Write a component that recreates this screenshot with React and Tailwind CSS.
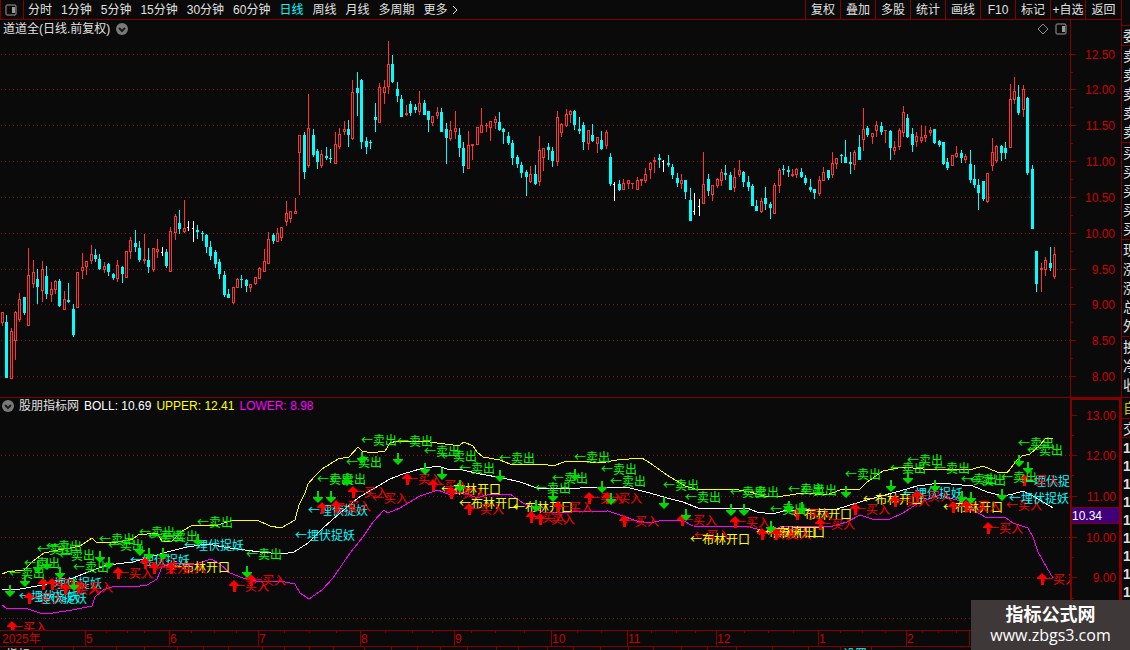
import React from 'react';

const periods = ['分时', '1分钟', '5分钟', '15分钟', '30分钟', '60分钟', '日线', '周线', '月线', '多周期'];
const actions = ['复权', '叠加', '多股', '统计', '画线', 'F10', '标记', '+自选', '返回'];

// x, kind (r = up, c = down, w = flat), high, body top, body bottom, low
const candles = [
    [2, 'r', 312, 312, 323, 326], [6, 'c', 315, 322, 378, 378], [11, 'r', 328, 331, 379, 379], [15, 'r', 311, 312, 341, 360],
    [19, 'r', 293, 299, 320, 322], [24, 'c', 297, 297, 313, 315], [28, 'r', 248, 275, 326, 326], [33, 'r', 260, 272, 284, 288],
    [37, 'c', 269, 279, 287, 304], [42, 'r', 261, 269, 291, 302], [46, 'c', 266, 276, 294, 299], [51, 'r', 282, 289, 295, 302],
    [55, 'r', 280, 281, 290, 294], [59, 'c', 279, 281, 306, 307], [64, 'r', 291, 299, 310, 310], [68, 'c', 283, 300, 302, 303],
    [73, 'c', 304, 309, 335, 337], [77, 'r', 272, 272, 308, 308], [82, 'r', 253, 267, 271, 279], [86, 'r', 261, 261, 267, 275],
    [91, 'r', 245, 254, 261, 264], [95, 'c', 249, 255, 259, 262], [99, 'c', 254, 259, 269, 270], [104, 'r', 262, 266, 270, 273],
    [108, 'c', 263, 264, 272, 276], [113, 'c', 273, 274, 278, 280], [117, 'r', 260, 265, 279, 282], [122, 'c', 266, 267, 274, 283],
    [126, 'r', 251, 251, 278, 278], [130, 'r', 237, 240, 252, 259], [135, 'c', 230, 243, 247, 252], [139, 'c', 241, 248, 260, 262],
    [144, 'r', 234, 259, 261, 264], [148, 'c', 248, 260, 267, 273], [153, 'r', 248, 248, 270, 272], [157, 'r', 239, 249, 252, 258],
    [162, 'w', 247, 252, 253, 256], [166, 'c', 249, 252, 266, 268], [170, 'r', 227, 231, 272, 272], [175, 'r', 214, 216, 233, 240],
    [179, 'c', 210, 223, 229, 234], [184, 'r', 200, 228, 232, 233], [188, 'w', 221, 227, 228, 231], [193, 'w', 221, 228, 229, 242],
    [197, 'c', 225, 230, 232, 239], [202, 'c', 231, 233, 234, 241], [206, 'c', 234, 235, 247, 253], [210, 'c', 241, 247, 256, 260],
    [215, 'c', 250, 252, 264, 268], [219, 'c', 259, 262, 274, 279], [224, 'c', 271, 275, 295, 297], [228, 'c', 289, 294, 298, 298],
    [233, 'r', 287, 287, 303, 304], [237, 'r', 278, 279, 288, 288], [241, 'c', 275, 279, 280, 288], [246, 'c', 279, 280, 286, 292],
    [250, 'r', 284, 284, 288, 292], [255, 'r', 277, 277, 284, 285], [259, 'r', 267, 268, 279, 279], [264, 'r', 249, 261, 272, 272],
    [268, 'r', 232, 239, 264, 264], [273, 'c', 233, 235, 241, 244], [277, 'r', 228, 233, 242, 242], [281, 'r', 227, 227, 238, 241],
    [286, 'r', 201, 213, 222, 226], [290, 'r', 211, 211, 219, 223], [295, 'r', 198, 211, 214, 214], [299, 'r', 135, 135, 153, 195],
    [304, 'c', 132, 135, 172, 179], [308, 'r', 94, 128, 166, 168], [313, 'c', 129, 135, 155, 157], [317, 'c', 149, 151, 162, 169],
    [321, 'r', 150, 154, 166, 168], [326, 'c', 147, 156, 158, 160], [330, 'c', 149, 158, 159, 163], [335, 'r', 132, 144, 164, 164],
    [339, 'r', 128, 134, 147, 149], [344, 'r', 121, 129, 132, 135], [348, 'c', 120, 129, 135, 147], [352, 'r', 80, 92, 139, 140],
    [357, 'c', 72, 88, 93, 116], [361, 'c', 79, 80, 142, 149], [366, 'c', 137, 141, 147, 154], [370, 'c', 140, 142, 143, 149],
    [375, 'c', 103, 117, 120, 132], [379, 'r', 83, 87, 123, 123], [384, 'r', 80, 87, 93, 104], [388, 'r', 41, 64, 87, 94],
    [392, 'c', 55, 64, 82, 83], [397, 'c', 82, 89, 96, 102], [401, 'c', 95, 99, 117, 117], [406, 'r', 105, 113, 115, 116],
    [410, 'c', 101, 104, 113, 116], [415, 'c', 104, 107, 110, 113], [419, 'r', 91, 103, 112, 115], [424, 'c', 100, 103, 115, 115],
    [428, 'c', 111, 111, 120, 132], [432, 'r', 116, 116, 123, 126], [437, 'r', 107, 112, 116, 119], [441, 'c', 108, 112, 132, 132],
    [446, 'c', 123, 129, 138, 164], [450, 'r', 121, 130, 139, 141], [455, 'r', 111, 128, 132, 139], [459, 'c', 128, 135, 148, 157],
    [463, 'c', 142, 148, 166, 173], [468, 'r', 131, 145, 169, 169], [472, 'r', 144, 144, 146, 160], [477, 'r', 127, 127, 145, 145],
    [481, 'r', 108, 125, 133, 133], [486, 'r', 123, 125, 126, 132], [490, 'r', 121, 121, 128, 141], [495, 'r', 116, 119, 123, 129],
    [499, 'c', 112, 122, 130, 131], [503, 'c', 128, 129, 132, 144], [508, 'c', 132, 136, 143, 145], [512, 'c', 140, 143, 158, 165],
    [517, 'c', 155, 157, 164, 168], [521, 'c', 162, 165, 173, 178], [526, 'c', 170, 172, 177, 196], [530, 'r', 166, 174, 182, 183],
    [535, 'c', 165, 174, 184, 185], [539, 'r', 136, 150, 182, 186], [543, 'r', 148, 148, 158, 171], [548, 'c', 143, 147, 150, 160],
    [552, 'c', 147, 151, 161, 167], [557, 'r', 111, 117, 162, 166], [561, 'r', 123, 124, 133, 137], [566, 'r', 109, 114, 126, 127],
    [570, 'r', 110, 111, 115, 123], [574, 'c', 110, 111, 125, 130], [579, 'c', 117, 129, 131, 134], [583, 'c', 122, 125, 142, 150],
    [588, 'r', 130, 130, 144, 150], [592, 'c', 124, 135, 141, 142], [597, 'r', 137, 137, 144, 153], [601, 'c', 131, 140, 149, 150],
    [606, 'r', 130, 132, 146, 149], [610, 'c', 153, 157, 184, 186], [614, 'w', 182, 184, 185, 201], [619, 'c', 180, 184, 190, 191],
    [623, 'r', 179, 183, 190, 190], [628, 'r', 180, 180, 184, 189], [632, 'r', 183, 183, 184, 189], [637, 'r', 177, 180, 190, 190],
    [641, 'r', 179, 179, 181, 186], [645, 'r', 168, 174, 181, 183], [650, 'r', 162, 163, 170, 179], [654, 'r', 157, 160, 162, 173],
    [659, 'c', 154, 158, 160, 168], [663, 'w', 160, 161, 162, 172], [668, 'c', 155, 163, 165, 167], [672, 'c', 164, 167, 175, 179],
    [677, 'c', 173, 178, 183, 187], [681, 'r', 174, 180, 184, 189], [685, 'c', 180, 180, 192, 199], [690, 'c', 188, 200, 221, 221],
    [694, 'w', 193, 211, 212, 215], [699, 'w', 199, 206, 207, 216], [703, 'r', 152, 184, 204, 204], [708, 'c', 174, 179, 191, 196],
    [712, 'r', 185, 185, 195, 201], [717, 'r', 178, 179, 186, 188], [721, 'r', 169, 172, 181, 186], [725, 'c', 165, 173, 175, 180],
    [730, 'c', 172, 175, 190, 190], [734, 'r', 168, 177, 188, 192], [739, 'r', 160, 170, 175, 177], [743, 'c', 171, 172, 182, 187],
    [748, 'c', 176, 182, 187, 191], [752, 'c', 184, 186, 206, 206], [756, 'c', 200, 206, 211, 211], [761, 'r', 198, 201, 212, 213],
    [765, 'c', 187, 198, 204, 210], [770, 'c', 202, 204, 208, 219], [774, 'r', 183, 185, 214, 214], [779, 'r', 168, 170, 186, 193],
    [783, 'c', 165, 169, 170, 175], [788, 'c', 166, 170, 172, 177], [792, 'r', 169, 174, 176, 177], [796, 'r', 168, 169, 175, 178],
    [801, 'c', 168, 172, 177, 178], [805, 'c', 175, 178, 183, 185], [810, 'c', 179, 187, 190, 192], [814, 'c', 189, 189, 193, 199],
    [819, 'r', 176, 180, 194, 196], [823, 'r', 167, 172, 181, 181], [828, 'c', 170, 170, 178, 180], [832, 'r', 152, 163, 175, 178],
    [836, 'r', 158, 158, 164, 169], [841, 'c', 154, 155, 156, 163], [845, 'c', 140, 157, 163, 163], [850, 'c', 152, 162, 164, 174],
    [854, 'r', 150, 152, 165, 170], [859, 'c', 135, 147, 160, 160], [863, 'r', 108, 129, 140, 151], [867, 'c', 126, 128, 135, 137],
    [872, 'r', 133, 133, 137, 144], [876, 'r', 121, 125, 131, 137], [881, 'c', 122, 126, 132, 135], [885, 'r', 130, 130, 131, 143],
    [890, 'c', 130, 131, 148, 160], [894, 'r', 141, 147, 151, 155], [899, 'r', 128, 130, 147, 150], [903, 'r', 106, 112, 133, 137],
    [907, 'c', 114, 118, 137, 138], [912, 'c', 128, 134, 145, 152], [916, 'r', 132, 136, 142, 147], [921, 'r', 125, 137, 141, 143],
    [925, 'r', 126, 135, 138, 142], [930, 'r', 127, 130, 133, 136], [934, 'c', 129, 129, 143, 144], [939, 'c', 140, 141, 145, 147],
    [943, 'c', 142, 142, 164, 165], [947, 'c', 158, 162, 168, 170], [952, 'r', 155, 155, 166, 166], [956, 'r', 146, 153, 157, 158],
    [961, 'c', 150, 153, 158, 163], [965, 'r', 154, 156, 160, 163], [970, 'c', 150, 164, 180, 183], [974, 'c', 165, 179, 185, 188],
    [978, 'c', 179, 185, 193, 210], [983, 'c', 181, 181, 199, 201], [987, 'r', 173, 173, 202, 203], [992, 'r', 138, 152, 166, 171],
    [996, 'r', 145, 146, 161, 163], [1001, 'c', 145, 146, 153, 161], [1005, 'c', 142, 148, 153, 159], [1010, 'r', 84, 99, 148, 148],
    [1014, 'r', 77, 91, 100, 104], [1018, 'c', 85, 97, 113, 115], [1023, 'r', 85, 89, 110, 117], [1027, 'c', 97, 98, 173, 175],
    [1032, 'c', 165, 169, 229, 229], [1036, 'c', 251, 251, 284, 292], [1041, 'r', 263, 268, 270, 292], [1045, 'r', 257, 260, 270, 276],
    [1050, 'c', 247, 263, 268, 271], [1054, 'r', 247, 254, 277, 279],
];

const priceTicks = [['12.50', 54], ['12.00', 89], ['11.50', 125], ['11.00', 161], ['10.50', 197], ['10.00', 233], ['9.50', 269], ['9.00', 304], ['8.50', 340], ['8.00', 376]];
const priceMinor = [72, 107, 143, 179, 215, 251, 287, 322, 358];
const bollTicks = [['13.00', 415], ['12.00', 455], ['11.00', 496], ['10.00', 537], ['9.00', 577]];
const bollMinor = [435, 475, 557, 598];

const upper = '2,574 7,572 24,570 33,561 44,553 58,550 70,548 80,546 92,538 96,542 118,542 133,539 138,535 157,533 162,541 172,541 182,531 193,525 215,526 233,520 257,520 270,526 281,528 295,520 299,505 305,493 308,484 315,476 322,469 338,459 349,457 358,447 362,451 372,453 385,451 390,443 397,441 423,441 437,443 453,445 460,445 464,442 473,446 477,452 483,457 500,460 510,464 543,464 553,466 567,461 580,461 600,463 617,460 642,458 650,463 667,475 685,486 695,489 733,489 750,492 767,497 783,496 803,493 827,495 840,490 860,489 867,482 883,471 903,467 923,469 973,469 983,466 997,472 1007,473 1017,460 1022,456 1030,454 1040,445 1045,439 1053,438';
const middle = '2,590 20,589 43,585 73,578 88,572 107,565 133,562 150,557 167,552 187,547 207,544 230,548 260,552 282,554 294,552 308,543 323,528 340,513 358,498 373,489 390,479 403,474 420,469 438,466 447,469 463,470 480,474 503,478 520,482 537,488 580,488 610,487 630,488 650,493 667,498 683,502 698,508 747,508 757,512 773,514 783,511 803,510 837,509 847,506 860,502 877,497 900,491 917,486 940,483 973,486 987,492 1003,496 1013,494 1023,491 1033,496 1045,503 1053,508';
const lower = '2,605 6,608 25,608 40,613 53,613 72,610 92,606 95,597 103,590 115,586 133,587 147,585 157,579 162,567 173,563 193,565 211,559 220,564 230,573 243,578 260,582 280,581 295,584 300,593 309,599 322,590 333,578 350,553 363,537 373,522 384,510 388,513 400,508 420,496 438,490 450,495 463,492 477,498 490,494 510,494 523,503 543,512 570,512 608,511 620,515 637,521 650,523 663,520 682,520 693,526 750,527 767,532 783,526 833,526 847,522 860,515 875,520 890,519 903,513 920,502 940,495 960,501 973,510 987,518 1005,517 1013,523 1028,528 1033,537 1038,552 1047,568 1053,578';

// marker centre x, marker top y
const sells = [
    [10, 585], [25, 575], [38, 561], [47, 558], [60, 567], [74, 579], [100, 551], [109, 557], [140, 544], [149, 548], [163, 548],
    [198, 534], [247, 566], [318, 491], [331, 491], [347, 474], [362, 452], [398, 453], [425, 463], [442, 468], [460, 480], [500, 470],
    [536, 500], [553, 490], [575, 469], [602, 481], [611, 493], [664, 497], [686, 509], [731, 504], [744, 504], [771, 521],
    [789, 501], [802, 502], [846, 486], [891, 480], [908, 472], [935, 480], [962, 491], [971, 492], [1002, 489], [1019, 455], [1028, 462],
];
const buys = [
    [12, 621], [29, 592], [43, 578], [52, 578], [65, 583], [78, 581], [118, 567], [145, 557], [154, 562], [171, 562], [234, 580],
    [251, 574], [322, 502], [336, 500], [353, 486], [407, 473], [433, 479], [451, 487], [469, 503], [531, 511], [540, 513], [558, 501],
    [589, 492], [607, 492], [624, 515], [682, 514], [735, 516], [762, 528], [776, 528], [797, 508], [820, 518], [855, 503], [895, 495],
    [917, 490], [953, 501], [966, 500], [988, 522], [1024, 474], [1042, 573],
];

// labels that carry no arrow marker
const notes = [
    ['←买入', 372, 498, '#ff0000'], ['←买入', 694, 535, '#ff0000'], ['←买入', 1006, 505, '#ff0000'],
    ['←布林开口', 170, 567, '#ffff00'], ['←布林开口', 441, 489, '#ffff00'], ['←布林开口', 459, 503, '#ffff00'],
    ['←布林开口', 513, 507, '#ffff00'], ['←布林开口', 690, 539, '#ffff00'], ['←布林开口', 756, 532, '#ffff00'],
    ['←布林开口', 765, 532, '#ffff00'], ['←布林开口', 792, 514, '#ffff00'], ['←布林开口', 863, 499, '#ffff00'],
    ['←布林开口', 943, 507, '#ffff00'],
    ['←埋伏捉妖', 19, 596, '#00ffff'], ['←埋伏捉妖', 27, 598, '#00ffff'], ['←埋伏捉妖', 42, 583, '#00ffff'],
    ['←埋伏捉妖', 130, 560, '#00ffff'], ['←埋伏捉妖', 184, 545, '#00ffff'], ['←埋伏捉妖', 308, 510, '#00ffff'],
    ['←埋伏捉妖', 295, 535, '#00ffff'], ['←埋伏捉妖', 903, 493, '#00ffff'], ['←埋伏捉妖', 1022, 481, '#00ffff'],
    ['←埋伏捉妖', 1009, 498, '#00ffff'],
];

const months = [['5', 85], ['6', 169], ['7', 258], ['8', 360], ['9', 454], ['10', 551], ['11', 627], ['12', 716], ['1', 818], ['2', 906], ['', 969]];
const weekTicks = [106, 127, 144, 191, 214, 236, 284, 309, 336, 385, 412, 432, 471, 495, 524, 577, 601, 651, 676, 695, 744, 768, 793, 840, 862, 885, 922, 938, 956];
const footTicks = [42, 73, 116, 144, 177, 203, 228, 262, 284, 309, 333, 364, 391, 417, 440, 467, 496, 518, 547, 573, 600, 628, 653, 681, 707, 736, 772, 808, 840, 871];

const candleColor = { r: '#ff3232', c: '#00ffff', w: '#ffffff' };

function Candle({ data }) {
    const [x, kind, high, top, bottom, low] = data;
    const fill = candleColor[kind];
    if (kind === 'w') {
        return (
            <g fill={fill}>
                <rect x={x} y={high} width="1" height={low - high} />
                <rect x={x - 1} y={top} width="1" height="1" />
            </g>
        );
    }
    return (
        <g fill={fill}>
            <rect x={x} y={high} width="1" height={low - high} />
            <rect x={x - 1} y={top} width="3" height={bottom - top} />
            {kind === 'r' && bottom - top > 2 && (
                <rect x={x} y={top + 1} width="1" height={bottom - top - 2} fill="#0a0a0a" />
            )}
        </g>
    );
}

function Grid({ id, rows }) {
    return (
        <>
            <defs>
                <pattern id={id} width="4" height="1" patternUnits="userSpaceOnUse">
                    <rect x="1" width="1" height="1" fill="#821414" />
                </pattern>
            </defs>
            {rows.map(y => <rect key={y} x="0" y={y} width="100%" height="1" fill={`url(#${id})`} />)}
        </>
    );
}

function Scale({ ticks, minor }) {
    return (
        <>
            {ticks.map(([label, y]) => (
                <g key={label}>
                    <rect x="0" y={y} width="5" height="1" fill="#820000" />
                    <text x="44" y={y + 5} textAnchor="end" fill="#cc0000">{label}</text>
                </g>
            ))}
            {minor.map(y => <rect key={y} x="0" y={y} width="2" height="1" fill="#820000" />)}
        </>
    );
}

function PanelIcon({ color }) {
    return (
        <svg width="12" height="12" fill="none">
            <rect x="1" y="1" width="10" height="10" rx="1" stroke={color} />
            <rect x="7" y="3" width="3" height="6" fill={color} />
        </svg>
    );
}

function MoreDot() {
    return (
        <svg width="12" height="12" fill="none">
            <circle cx="6" cy="6" r="6" fill="#7a7a7a" />
            <path d="M3 5l3 3 3-3" stroke="#1a1a1a" strokeWidth="2" />
        </svg>
    );
}

function QuoteGroup({ rows, className }) {
    return (
        <div className={`flex flex-col border-t border-[#820000] pl-px ${className}`}>
            {rows.map((row, i) => <span key={i} className="h-[19px] shrink-0">{row}</span>)}
        </div>
    );
}

export default function App() {
    return (
        <div className="relative flex h-screen overflow-hidden bg-[#0a0a0a] text-[12px] leading-4 text-[#e0e0e0] font-['Liberation_Sans','Noto_Sans_CJK_SC',sans-serif]">
            <main className="flex min-w-0 flex-1 flex-col">
                {/* Toolbar */}
                <nav className="flex h-5 shrink-0 items-stretch justify-between overflow-hidden whitespace-nowrap border-b border-l border-[#820000]">
                    <div className="flex items-center">
                        <button type="button" aria-label="侧栏" className="flex h-full w-[23px] items-center justify-center border-r border-[#820000] pr-0.5">
                            <PanelIcon color="#9a9a9a" />
                        </button>
                        <div className="flex gap-[9px] pl-1">
                            {periods.map(p => (
                                <button key={p} type="button" className={p === '日线' ? 'text-[#00ffff]' : ''}>{p}</button>
                            ))}
                            <button type="button" className="flex items-center gap-1">
                                更多
                                <svg width="6" height="10" fill="none"><path d="M1 1l4 4-4 4" stroke="#e0e0e0" /></svg>
                            </button>
                        </div>
                    </div>
                    <div className="flex">
                        {actions.map(a => (
                            <button key={a} type="button" className="w-[35px] border-l border-[#820000] text-center last:w-9">{a}</button>
                        ))}
                    </div>
                </nav>

                {/* Daily candles */}
                <section className="flex min-h-0 flex-[378_1_0%] border-b border-[#820000]">
                    <div className="relative min-w-0 flex-1">
                        <svg className="absolute inset-0 h-full w-full" shapeRendering="crispEdges">
                            <g transform="translate(0 -20)">
                                <Grid id="price-dots" rows={priceTicks.map(t => t[1])} />
                                {candles.map(c => <Candle key={c[0]} data={c} />)}
                            </g>
                        </svg>
                        <header className="relative flex items-center justify-between pl-[3px] pr-[3px] pt-px">
                            <h1 className="flex items-center gap-1.5">
                                道道全(日线.前复权)
                                <MoreDot />
                            </h1>
                            <div className="flex items-center gap-1.5">
                                <svg width="12" height="12" fill="none"><path d="M6 1l5 5-5 5-5-5z" stroke="#8a8a8a" /></svg>
                                <PanelIcon color="#9a9a9a" />
                            </div>
                        </header>
                    </div>
                    <svg className="h-full w-[51px] shrink-0 border-l border-[#820000]">
                        <g transform="translate(0 -20)">
                            <Scale ticks={priceTicks} minor={priceMinor} />
                        </g>
                    </svg>
                </section>

                {/* Bollinger indicator */}
                <section className="flex min-h-0 flex-[232_1_0%]">
                    <div className="relative min-w-0 flex-1 overflow-hidden">
                        <svg className="absolute inset-0 h-full w-full font-['Noto_Sans_CJK_SC',sans-serif]">
                            <g transform="translate(0 -398)">
                                <Grid id="boll-dots" rows={[455, 496, 537, 577, 618]} />
                                <g fill="none" shapeRendering="crispEdges">
                                    <polyline points={upper} stroke="#ffff00" />
                                    <polyline points={middle} stroke="#ffffff" />
                                    <polyline points={lower} stroke="#ff00ff" />
                                </g>
                                {notes.map(([text, x, y, fill]) => (
                                    <text key={`${x}-${y}`} x={x} y={y + 5} fill={fill}>{text}</text>
                                ))}
                                {buys.map(([x, y]) => (
                                    <g key={x} fill="#ff0000">
                                        <text x={x - 1} y={y + 11}>←买入</text>
                                        <path d={`M${x} ${y}l5 5v1h-3v6h-3v-6h-4v-1z`} />
                                    </g>
                                ))}
                                {sells.map(([x, y]) => (
                                    <g key={x}>
                                        <text x={x - 1} y={y - 7} fill="#00ff00">←卖出</text>
                                        <path d={`M${x - 1} ${y}h2v6h4v1l-5 5-5-5v-1h4z`} fill="#00dc00" />
                                    </g>
                                ))}
                            </g>
                        </svg>
                        <header className="relative flex items-center gap-[5px] pl-0.5">
                            <MoreDot />
                            <span>股朋指标网</span>
                            <span className="text-white">BOLL: 10.69</span>
                            <span className="text-[#ffff00]">UPPER: 12.41</span>
                            <span className="text-[#ff00ff]">LOWER: 8.98</span>
                        </header>
                    </div>
                    <div className="relative w-[51px] shrink-0 border-2 border-b-0 border-[#820000]">
                        <svg className="h-full w-full">
                            <g transform="translate(0 -400)">
                                <Scale ticks={bollTicks} minor={bollMinor} />
                            </g>
                        </svg>
                        <span className="absolute inset-x-0 top-[107px] h-[17px] border-y border-[#820000] bg-[#40007c] text-white">10.34</span>
                    </div>
                </section>

                {/* Time axis */}
                <svg className="h-[17px] w-full shrink-0 border-y border-[#820000]">
                    <text x="2" y="12" fill="#cc0000">2025年</text>
                    {months.map(([m, x]) => (
                        <g key={x}>
                            <rect x={x} y="0" width="1" height="15" fill="#820000" />
                            <text x={x + 1} y="12" fill="#cc0000">{m}</text>
                        </g>
                    ))}
                    {weekTicks.map(x => <rect key={x} x={x} y="0" width="1" height="2" fill="#820000" />)}
                </svg>
                <svg className="h-[3px] w-full shrink-0">
                    {footTicks.map(x => <rect key={x} x={x} y="0" width="1" height="3" fill="#820000" />)}
                    <text x="6" y="12" fill="#e0e0e0">指标</text>
                    <text x="843" y="12" fill="#00ffff">设置</text>
                </svg>
            </main>

            {/* Quote panel, only its edge fits in the window */}
            <aside className="flex w-[9px] shrink-0 flex-col overflow-hidden border-l border-[#820000] pt-[25px] text-[14px] leading-5">
                <QuoteGroup className="h-5" rows={['委']} />
                <QuoteGroup className="h-[97px]" rows={['卖', '卖', '卖', '卖', '卖']} />
                <QuoteGroup className="h-[97px]" rows={['买', '买', '买', '买', '买']} />
                <QuoteGroup className="h-[97px]" rows={['现', '涨', '涨', '总', '外']} />
                <QuoteGroup className="h-[61px]" rows={['换', '净', '收']} />
                <QuoteGroup className="h-[21px] text-[#c8c800]" rows={['自']} />
                <QuoteGroup className="h-[19px]" rows={['交']} />
                <div className="flex flex-col border-t border-[#820000] pl-px font-bold">
                    {[1, 2, 3, 4, 5, 6, 7, 8, 9].map(n => <span key={n} className="h-[18px] shrink-0">1</span>)}
                </div>
            </aside>

            <a href="#site" className="absolute bottom-0 right-0 flex h-[50px] w-[159px] flex-col items-center justify-center bg-[#3e3838] text-white">
                <strong className="text-[18px] leading-5">指标公式网</strong>
                <span className="text-[16px] leading-5 font-['Open_Sans',sans-serif]">www.zbgs3.com</span>
            </a>
        </div>
    );
}
